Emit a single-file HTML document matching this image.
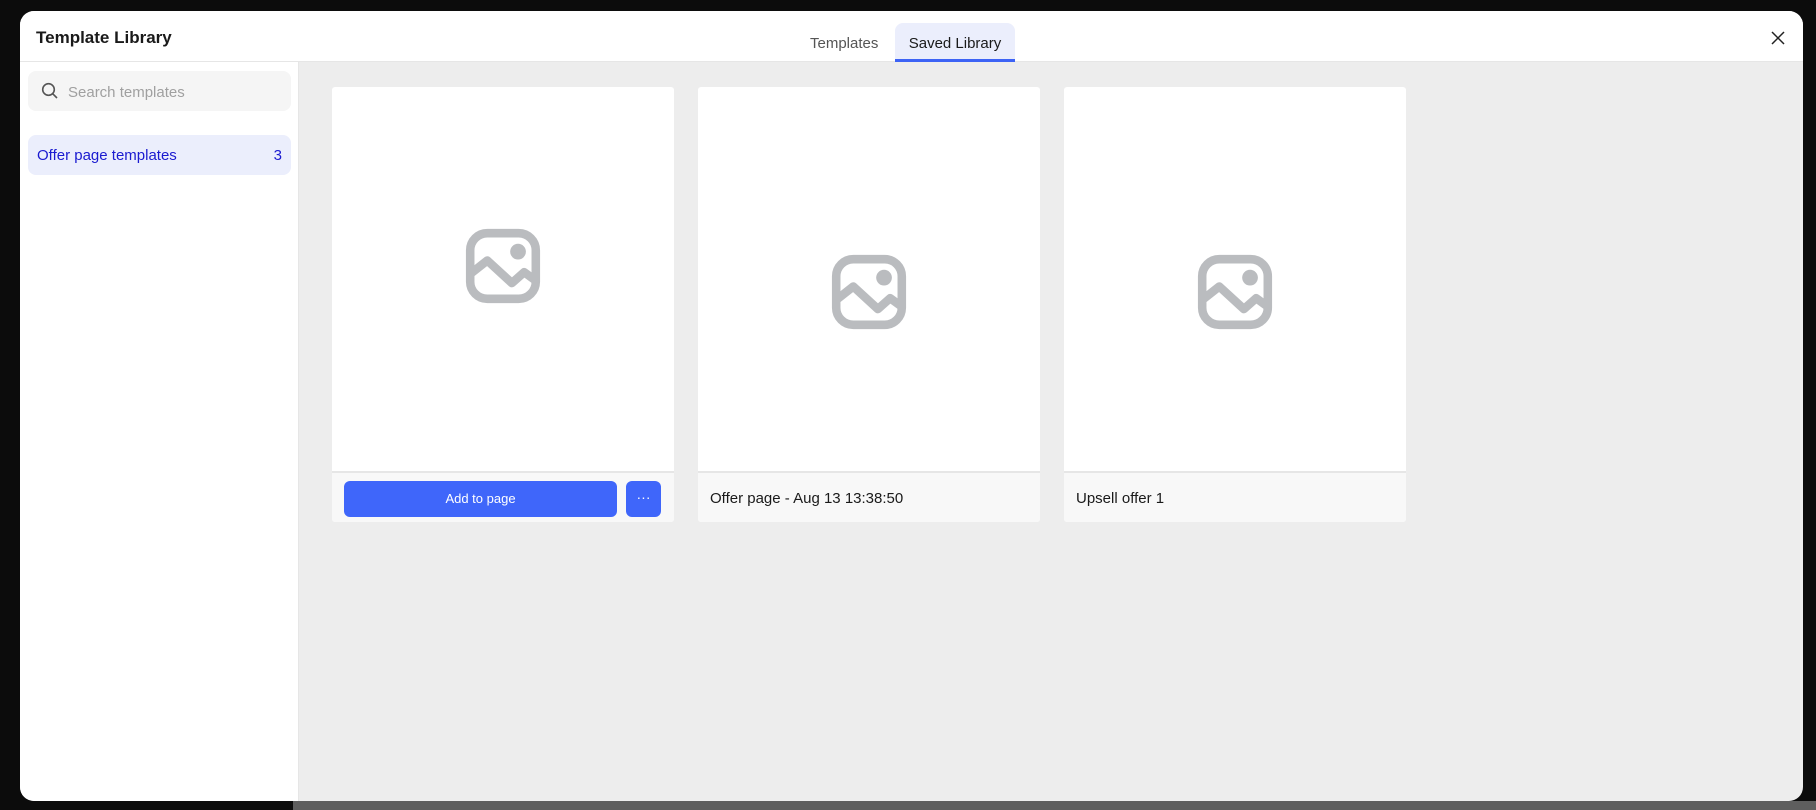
<!DOCTYPE html>
<html><head><meta charset="utf-8"><style>
*{box-sizing:border-box;margin:0;padding:0}
body{width:1816px;height:810px;overflow:hidden;background:#0c0c0c;font-family:"Liberation Sans",sans-serif;position:relative}
.bot{position:absolute;left:293px;top:801px;width:1523px;height:9px;background:#5e5e5e}
.modal{position:absolute;left:20px;top:11px;width:1783px;height:790px;background:#ededed;border-radius:14px;overflow:hidden}
.hdr{position:absolute;left:0;top:0;width:100%;height:51px;background:#fff;border-bottom:1px solid #e6e6e6}
.title{position:absolute;left:16px;top:17px;font-size:17px;font-weight:bold;color:#1a1a1a}
.tab{position:absolute;top:12px;height:39px;line-height:42px;font-size:15px;color:#555}
.tab.a{left:875px;width:120px;background:#ebeefc;border-radius:8px 8px 0 0;color:#1a1a1a;text-align:center;border-bottom:3px solid #3d63f5}
.close{position:absolute;left:1748px;top:17px}
.side{position:absolute;left:0;top:51px;width:279px;height:739px;background:#fff;border-right:1px solid #e6e6e6}
.search{position:absolute;left:8px;top:9px;width:263px;height:40px;background:#f5f5f5;border-radius:8px}
.search span{position:absolute;left:40px;top:13px;font-size:15px;color:#a0a0a0}
.search svg{position:absolute;left:13px;top:11px}
.item{position:absolute;left:8px;top:73px;width:263px;height:40px;background:#ebeefc;border-radius:8px;color:#1a1ad0;font-size:15px;line-height:42px;padding:0 9px}
.item b{float:right;font-weight:normal}
.card{position:absolute;top:76px;width:342px;height:435px;background:#fff;border-radius:3px;overflow:hidden}
.foot{position:absolute;left:0;top:384px;width:100%;height:51px;background:#f8f8f8;border-top:2px solid #e6e6e6;font-size:15px;color:#1a1a1a;line-height:51px;padding-left:12px}
.btn{position:absolute;left:12px;top:8px;width:273px;height:36px;background:#3f66fa;border-radius:6px;color:#fff;font-size:13px;text-align:center;line-height:36px}
.dots{position:absolute;left:294px;top:8px;width:35px;height:36px;background:#3f66fa;border-radius:6px;color:#fff;font-size:14px;text-align:center;line-height:33px;padding:0}
.ic{position:absolute}
</style></head><body>
<div class="bot"></div>
<div class="modal">
 <div class="hdr">
  <div class="title">Template Library</div>
  <div class="tab" style="left:790px">Templates</div>
  <div class="tab a">Saved Library</div>
  <svg class="close" width="20" height="20" viewBox="0 0 20 20"><path d="M4 4L16 16M16 4L4 16" stroke="#222" stroke-width="1.5"/></svg>
 </div>
 <div class="side">
  <div class="search"><svg width="18" height="18" viewBox="0 0 18 18"><circle cx="7.5" cy="7.5" r="5.8" fill="none" stroke="#555" stroke-width="1.6"/><path d="M11.8 11.8L16 16" stroke="#555" stroke-width="1.6"/></svg><span>Search templates</span></div>
  <div class="item">Offer page templates<b>3</b></div>
 </div>
 <div class="card" style="left:312px">
  <svg class="ic" style="left:130px;top:138px" width="82" height="82" viewBox="0 0 24 24"><rect x="2.4" y="2.4" width="19.2" height="19.2" rx="5" fill="none" stroke="#babcbf" stroke-width="2.5"/><circle cx="16.4" cy="7.8" r="2.3" fill="#babcbf"/><path d="M2.8 14L7.4 10.4L14.6 17L18.2 13.8L21.2 16" fill="none" stroke="#babcbf" stroke-width="2.5" stroke-linejoin="round"/></svg>
  <div class="foot" style="padding:0"><div class="btn">Add to page</div><div class="dots">···</div></div>
 </div>
 <div class="card" style="left:678px">
  <svg class="ic" style="left:130px;top:164px" width="82" height="82" viewBox="0 0 24 24"><rect x="2.4" y="2.4" width="19.2" height="19.2" rx="5" fill="none" stroke="#babcbf" stroke-width="2.5"/><circle cx="16.4" cy="7.8" r="2.3" fill="#babcbf"/><path d="M2.8 14L7.4 10.4L14.6 17L18.2 13.8L21.2 16" fill="none" stroke="#babcbf" stroke-width="2.5" stroke-linejoin="round"/></svg>
  <div class="foot">Offer page - Aug 13 13:38:50</div>
 </div>
 <div class="card" style="left:1044px">
  <svg class="ic" style="left:130px;top:164px" width="82" height="82" viewBox="0 0 24 24"><rect x="2.4" y="2.4" width="19.2" height="19.2" rx="5" fill="none" stroke="#babcbf" stroke-width="2.5"/><circle cx="16.4" cy="7.8" r="2.3" fill="#babcbf"/><path d="M2.8 14L7.4 10.4L14.6 17L18.2 13.8L21.2 16" fill="none" stroke="#babcbf" stroke-width="2.5" stroke-linejoin="round"/></svg>
  <div class="foot">Upsell offer 1</div>
 </div>
</div>
</body></html>
